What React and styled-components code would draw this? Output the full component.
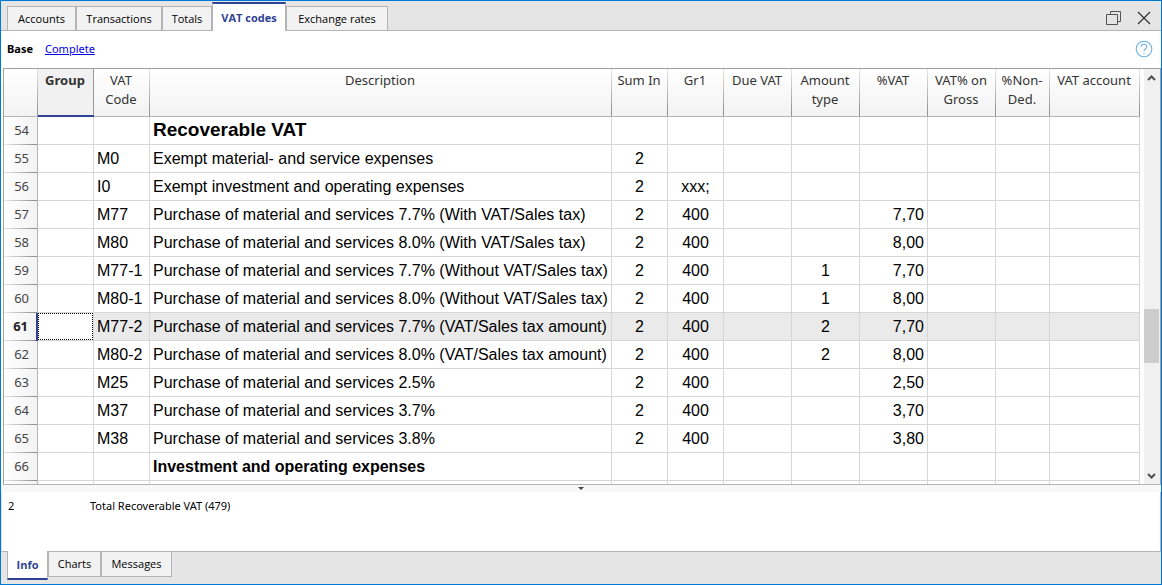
import React from "react";
import styled, { createGlobalStyle, css } from "styled-components";

const accent = "#2f4294";
const line = "#d6d6d6";
const frame = "#b4b4b4";
const uiFont = '"Noto Sans", "Open Sans", sans-serif';
const tabFont = '"Open Sans", "Noto Sans", sans-serif';
const dataFont = '"Liberation Sans", Arial, sans-serif';

const GlobalStyle = createGlobalStyle`
  *, *::before, *::after { box-sizing: border-box; }
  body { margin: 0; background: #fff; color: #000; font: 11px/16px ${uiFont}; }
`;

const Window = styled.main`
  display: flex;
  flex-direction: column;
  height: 100vh;
  border: 1px solid #0078d7;
  background: #fff;
`;

const TabBar = styled.header`
  display: flex;
  justify-content: space-between;
  align-items: center;
  height: 30px;
  padding: 0 9px 0 6px;
  background: #e5e5e5;
  box-shadow: inset 0 -1px ${frame};
`;

const Tabs = styled.nav`
  display: flex;
  align-items: flex-end;
  height: 30px;
`;

const Tab = styled.button`
  width: ${(p) => p.$width}px;
  height: 25px;
  padding: 0;
  border: 1px solid ${frame};
  background: #f2f2f2;
  color: #000;
  font: 11px/16px ${tabFont};
  white-space: nowrap;
  ${(p) =>
    p.$active &&
    css`
      height: 29px;
      border-top: 2px solid ${accent};
      border-bottom: 0;
      background: #fff;
      color: ${accent};
      font-weight: 700;
    `}
`;

const WindowActions = styled.div`
  display: flex;
  gap: 14px;
  padding-top: 4px;
`;

const IconButton = styled.button`
  display: flex;
  padding: 0;
  border: 0;
  background: transparent;
`;

const Toolbar = styled.div`
  display: flex;
  justify-content: space-between;
  align-items: center;
  height: 37px;
  padding: 0 8px 2px 6px;
`;

const Views = styled.nav`
  display: flex;
  gap: 12px;
`;

const CurrentView = styled.strong`
  font-weight: 700;
`;

const ViewLink = styled.a`
  color: #0000ee;
`;

const Grid = styled.section`
  display: flex;
  flex: 1;
  min-height: 0;
  margin-left: 2px;
  border: 1px solid #a0a0a0;
  border-bottom-color: ${frame};
  overflow: hidden;
`;

const TableView = styled.div`
  flex: 1;
  min-width: 0;
  margin-right: 4px;
  overflow: hidden;
`;

const Table = styled.table`
  width: 100%;
  table-layout: fixed;
  border-collapse: separate;
  border-spacing: 0;
  font: 16px/20px ${dataFont};
`;

const Col = styled.col`
  width: ${(p) => (p.$width ? `${p.$width}px` : "auto")};
`;

const HeadCell = styled.th`
  height: 48px;
  padding: 2px 2px 7px 0;
  border-bottom: 1px solid ${frame};
  background:
    linear-gradient(#e8e8e8, #8c8c8c) right / 1px 100% no-repeat,
    linear-gradient(#fff, #f3f3f3);
  color: #333;
  font: 13px/19px ${uiFont};
  vertical-align: top;
  ${(p) =>
    p.$current &&
    css`
      border-bottom: 2px solid ${accent};
      background: linear-gradient(#999, #999) right / 1px 100% no-repeat, #f1f1f1;
      font-weight: 700;
    `}
`;

const RowHead = styled.th`
  height: 28px;
  padding: 0 8px 2px 0;
  border-right: 1px solid ${frame};
  background:
    linear-gradient(90deg, #e8e8e8, #8c8c8c) bottom / 100% 1px no-repeat,
    linear-gradient(90deg, #fff, #f3f3f3);
  color: #444;
  font: 13px/19px ${uiFont};
  text-align: right;
  ${(p) =>
    p.$current &&
    css`
      border-right: 2px solid ${accent};
      color: #222;
      font-weight: 700;
    `}
`;

const Cell = styled.td`
  height: 28px;
  padding: 0 3px;
  border-right: 1px solid ${line};
  border-bottom: 1px solid ${line};
  background: ${(p) => (p.$current ? "#eaeaea" : "#fff")};
  text-align: ${(p) => p.$align || "left"};
  white-space: nowrap;
  ${(p) => p.$focused && css`
    padding: 0;
    background: #fff;
  `}
  ${(p) => p.$heading && css`font-weight: 700;`}
  ${(p) => p.$large && css`
    padding-bottom: 2px;
    font-size: 19px;
  `}
`;

const FocusBox = styled.div`
  height: 27px;
  border: 1px dotted #000;
`;

const Scrollbar = styled.div`
  display: flex;
  flex-direction: column;
  width: 16px;
  background: #f0f0f0;
`;

const ScrollButton = styled(IconButton)`
  justify-content: center;
  align-items: center;
  width: 15px;
  height: 17px;
`;

const Track = styled.div`
  display: flex;
  flex: 1;
  flex-direction: column;
`;

const TrackSpace = styled.div`
  flex: ${(p) => p.$share} 1 0;
`;

const Thumb = styled.div`
  flex: 0 0 54px;
  width: 15px;
  background: #cdcdcd;
`;

const Splitter = styled.div`
  display: flex;
  justify-content: center;
  height: 7px;
  background: #f8f8f8;
`;

const InfoPanel = styled.section`
  display: flex;
  height: 60px;
  padding: 6px;
  border: 1px solid ${frame};
  border-top: 0;
  border-left-color: #dcdcdc;
`;

const InfoNumber = styled.span`
  width: 82px;
`;

const Footer = styled.footer`
  height: 32px;
  padding-left: 6px;
  background: #e5e5e5;
`;

const FooterTabs = styled.nav`
  display: flex;
  align-items: flex-start;
`;

const FooterTab = styled(Tab)`
  height: 25px;
  border-top: 0;
  ${(p) =>
    p.$active &&
    css`
      height: 29px;
      margin-top: -1px;
      border-bottom: 2px solid ${accent};
    `}
`;

const columns = [
  ["Group", 56],
  ["VAT Code", 56],
  ["Description", 0],
  ["Sum In", 56, "center"],
  ["Gr1", 56, "center"],
  ["Due VAT", 68],
  ["Amount type", 68, "center"],
  ["%VAT", 68, "right"],
  ["VAT% on Gross", 68],
  ["%Non-Ded.", 54],
  ["VAT account", 90],
];

const entry = (no, code, text, sum, gr, amount, rate) => ({
  no,
  cells: ["", code, text, sum, gr, "", amount, rate, "", "", ""],
});

const rows = [
  { ...entry(54, "", "Recoverable VAT"), heading: true, large: true },
  entry(55, "M0", "Exempt material- and service expenses", "2"),
  entry(56, "I0", "Exempt investment and operating expenses", "2", "xxx;"),
  entry(57, "M77", "Purchase of material and services 7.7% (With VAT/Sales tax)", "2", "400", "", "7,70"),
  entry(58, "M80", "Purchase of material and services 8.0% (With VAT/Sales tax)", "2", "400", "", "8,00"),
  entry(59, "M77-1", "Purchase of material and services 7.7% (Without VAT/Sales tax)", "2", "400", "1", "7,70"),
  entry(60, "M80-1", "Purchase of material and services 8.0% (Without VAT/Sales tax)", "2", "400", "1", "8,00"),
  { ...entry(61, "M77-2", "Purchase of material and services 7.7% (VAT/Sales tax amount)", "2", "400", "2", "7,70"), current: true },
  entry(62, "M80-2", "Purchase of material and services 8.0% (VAT/Sales tax amount)", "2", "400", "2", "8,00"),
  entry(63, "M25", "Purchase of material and services 2.5%", "2", "400", "", "2,50"),
  entry(64, "M37", "Purchase of material and services 3.7%", "2", "400", "", "3,70"),
  entry(65, "M38", "Purchase of material and services 3.8%", "2", "400", "", "3,80"),
  { ...entry(66, "", "Investment and operating expenses"), heading: true },
  entry("", "", ""),
];

const tabs = [
  ["Accounts", 69],
  ["Transactions", 86],
  ["Totals", 50],
  ["VAT codes", 74],
  ["Exchange rates", 102],
];

const footerTabs = [
  ["Info", 41],
  ["Charts", 53],
  ["Messages", 71],
];

const RestoreIcon = () => (
  <svg width="16" height="16" viewBox="0 0 16 16" fill="none" stroke="#555">
    <path d="M.5 4.500h11v10H.5zM4.500 4V1.500h10v10H12" />
  </svg>
);

const CloseIcon = () => (
  <svg width="16" height="16" viewBox="0 0 16 16" fill="none" stroke="#333" strokeWidth="1.300">
    <path d="M2 2l12 12M14 2L2 14" />
  </svg>
);

const HelpIcon = () => (
  <svg width="18" height="18" viewBox="0 0 18 18" fill="none" stroke="#6cb2e0">
    <circle cx="9" cy="9" r="7.800" strokeWidth="1.100" />
    <path d="M6.200 6.800C6.200 3.300 11.800 3.400 11.800 6.700C11.800 8.800 9 8.800 9 11.300M9 12.700V14" strokeWidth="1.100" />
  </svg>
);

const Chevron = ({ down }) => (
  <svg width="9" height="6" viewBox="0 0 9 6" fill="none" stroke="#505050" strokeWidth="2">
    <path d={down ? "M1 1l3.500 3.500L8 1" : "M1 5l3.500-3.500L8 5"} />
  </svg>
);

export default function App() {
  return (
    <>
      <GlobalStyle />
      <Window>
        <TabBar>
          <Tabs aria-label="Tables">
            {tabs.map(([name, width]) => (
              <Tab key={name} $width={width} $active={name === "VAT codes"}>
                {name}
              </Tab>
            ))}
          </Tabs>
          <WindowActions>
            <IconButton aria-label="Restore window"><RestoreIcon /></IconButton>
            <IconButton aria-label="Close"><CloseIcon /></IconButton>
          </WindowActions>
        </TabBar>
        <Toolbar>
          <Views aria-label="Views">
            <CurrentView>Base</CurrentView>
            <ViewLink href="#complete">Complete</ViewLink>
          </Views>
          <IconButton aria-label="Help"><HelpIcon /></IconButton>
        </Toolbar>
        <Grid>
          <TableView>
            <Table>
              <colgroup>
                <Col $width={34} />
                {columns.map(([name, width]) => <Col key={name} $width={width} />)}
              </colgroup>
              <thead>
                <tr>
                  <HeadCell as="td" />
                  {columns.map(([name]) => (
                    <HeadCell key={name} scope="col" $current={name === "Group"}>{name}</HeadCell>
                  ))}
                </tr>
              </thead>
              <tbody>
                {rows.map((row, r) => (
                  <tr key={r}>
                    <RowHead scope="row" $current={row.current}>{row.no}</RowHead>
                    {row.cells.map((text, i) => {
                      const focused = row.current && i === 0;
                      return (
                        <Cell
                          key={i}
                          $align={columns[i][2]}
                          $current={row.current}
                          $focused={focused}
                          $heading={row.heading}
                          $large={row.large}
                        >
                          {focused ? <FocusBox /> : text}
                        </Cell>
                      );
                    })}
                  </tr>
                ))}
              </tbody>
            </Table>
          </TableView>
          <Scrollbar>
            <ScrollButton aria-label="Scroll up"><Chevron /></ScrollButton>
            <Track>
              <TrackSpace $share={223} />
              <Thumb />
              <TrackSpace $share={104} />
            </Track>
            <ScrollButton aria-label="Scroll down"><Chevron down /></ScrollButton>
          </Scrollbar>
        </Grid>
        <Splitter>
          <svg width="6" height="7" viewBox="0 0 6 7"><path d="M0 2h6L3 5z" fill="#444" /></svg>
        </Splitter>
        <InfoPanel>
          <InfoNumber>2</InfoNumber>
          <span>Total Recoverable VAT (479)</span>
        </InfoPanel>
        <Footer>
          <FooterTabs aria-label="Panels">
            {footerTabs.map(([name, width]) => (
              <FooterTab key={name} $width={width} $active={name === "Info"}>{name}</FooterTab>
            ))}
          </FooterTabs>
        </Footer>
      </Window>
    </>
  );
}
